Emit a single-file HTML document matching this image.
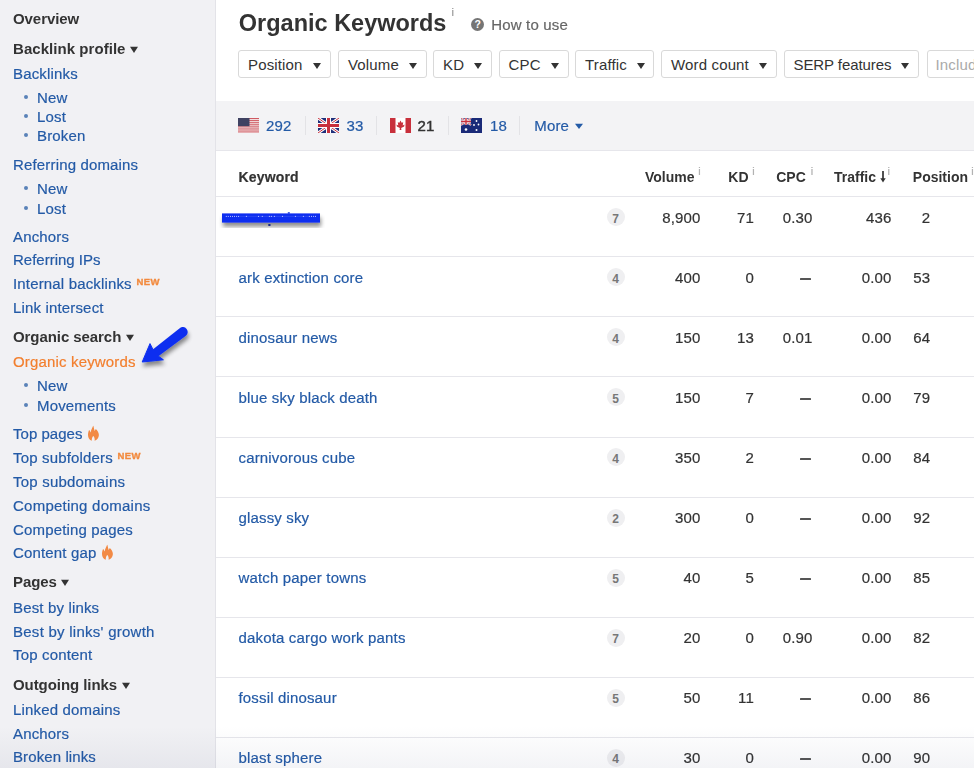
<!DOCTYPE html>
<html><head><meta charset="utf-8"><style>
*{margin:0;padding:0;box-sizing:border-box}
html,body{width:974px;height:768px;overflow:hidden;background:#fff;font-family:"Liberation Sans",sans-serif}
.t{position:absolute;white-space:nowrap;line-height:20px;letter-spacing:0.16px;transform:scaleY(1.03);-webkit-text-stroke:0.2px currentColor}
#side{position:absolute;left:0;top:0;width:216px;height:768px;background:#f1f1f4;border-right:1px solid #e3e3e8}
.caret{display:inline-block;width:0;height:0;border-left:4.2px solid transparent;border-right:4.2px solid transparent;border-top:6.7px solid #333;margin-left:4.5px;vertical-align:1.2px}
.newb{font-size:9.5px;font-weight:bold;color:#f28a3e;position:relative;top:-4.2px;margin-left:4.8px;line-height:10px;letter-spacing:0.3px;-webkit-text-stroke:0.35px #f28a3e}
.fire{position:relative;top:2px;margin-left:5px;vertical-align:baseline}
.bul{position:absolute;left:24px;width:4px;height:4px;border-radius:50%;background:#5a82b8}
#main{position:absolute;left:216px;top:0;width:758px;height:768px}
.help{position:absolute;width:13px;height:13px;border-radius:50%;background:#757575;color:#fff;font-size:10.5px;font-weight:bold;text-align:center;line-height:13.5px;transform:scale(1.0)}
.btn{position:absolute;top:50px;height:28px;border:1px solid #d9d9d9;border-radius:3px;font-size:15px;color:#333;line-height:26px;padding-top:1.4px;padding-left:9px;background:#fff;white-space:nowrap;letter-spacing:0.15px}
.dcaret{display:inline-block;width:0;height:0;border-left:4.3px solid transparent;border-right:4.3px solid transparent;border-top:6px solid #333;margin-left:10px;vertical-align:1.6px}
.band{position:absolute;left:216px;top:101px;width:758px;height:49px;background:#f3f3f5}
.hline{position:absolute;left:216px;width:758px;height:1px;background:#e6e6eb}
.badge{position:absolute;left:606.5px;width:18px;height:18px;border-radius:50%;background:#efeff1;color:#777;font-size:12px;font-weight:bold;text-align:center;line-height:18px;padding-top:1.6px}
.sup{font-size:11px;color:#b0b0b0;line-height:12px}
.flag{position:absolute}
.vsep{position:absolute;top:116px;width:1px;height:19px;background:#e3e3e6}
.mcaret{display:inline-block;width:0;height:0;border-left:4px solid transparent;border-right:4px solid transparent;border-top:5px solid #235aa6;margin-left:5.7px;vertical-align:2px}
#shade{position:absolute;left:0;top:726px;width:974px;height:42px;background:linear-gradient(rgba(40,50,100,0),rgba(40,50,100,0.055))}
</style></head><body>
<div id="side"></div>
<div class="t" style="left:13px;top:8.60px;font-size:15px;line-height:20px;color:#333333;font-weight:bold;transform-origin:0 15.20px;letter-spacing:-0.07px;-webkit-text-stroke:0">Overview</div>
<div class="t" style="left:13px;top:38.60px;font-size:15px;line-height:20px;color:#333333;font-weight:bold;transform-origin:0 15.20px;letter-spacing:0.05px;-webkit-text-stroke:0">Backlink profile<span class="caret"></span></div>
<div class="t" style="left:13px;top:63.70px;font-size:15px;line-height:20px;color:#235aa6;font-weight:normal;transform-origin:0 15.20px;">Backlinks</div>
<div class="bul" style="top:94.5px"></div>
<div class="t" style="left:37px;top:87.50px;font-size:15px;line-height:20px;color:#235aa6;font-weight:normal;transform-origin:0 15.20px;">New</div>
<div class="bul" style="top:114.3px"></div>
<div class="t" style="left:37px;top:107.30px;font-size:15px;line-height:20px;color:#235aa6;font-weight:normal;transform-origin:0 15.20px;">Lost</div>
<div class="bul" style="top:133.2px"></div>
<div class="t" style="left:37px;top:126.20px;font-size:15px;line-height:20px;color:#235aa6;font-weight:normal;transform-origin:0 15.20px;">Broken</div>
<div class="t" style="left:13px;top:154.50px;font-size:15px;line-height:20px;color:#235aa6;font-weight:normal;transform-origin:0 15.20px;">Referring domains</div>
<div class="bul" style="top:185.7px"></div>
<div class="t" style="left:37px;top:178.70px;font-size:15px;line-height:20px;color:#235aa6;font-weight:normal;transform-origin:0 15.20px;">New</div>
<div class="bul" style="top:205.7px"></div>
<div class="t" style="left:37px;top:198.70px;font-size:15px;line-height:20px;color:#235aa6;font-weight:normal;transform-origin:0 15.20px;">Lost</div>
<div class="t" style="left:13px;top:226.50px;font-size:15px;line-height:20px;color:#235aa6;font-weight:normal;transform-origin:0 15.20px;">Anchors</div>
<div class="t" style="left:13px;top:250.20px;font-size:15px;line-height:20px;color:#235aa6;font-weight:normal;transform-origin:0 15.20px;letter-spacing:0">Referring IPs</div>
<div class="t" style="left:13px;top:274.30px;font-size:15px;line-height:20px;color:#235aa6;font-weight:normal;transform-origin:0 15.20px;">Internal backlinks<span class="newb">NEW</span></div>
<div class="t" style="left:13px;top:297.90px;font-size:15px;line-height:20px;color:#235aa6;font-weight:normal;transform-origin:0 15.20px;">Link intersect</div>
<div class="t" style="left:13px;top:327.40px;font-size:15px;line-height:20px;color:#333333;font-weight:bold;transform-origin:0 15.20px;letter-spacing:-0.07px;-webkit-text-stroke:0">Organic search<span class="caret"></span></div>
<div class="t" style="left:13px;top:352.00px;font-size:15px;line-height:20px;color:#f27f2e;font-weight:normal;transform-origin:0 15.20px;">Organic keywords</div>
<div class="bul" style="top:383.1px"></div>
<div class="t" style="left:37px;top:376.10px;font-size:15px;line-height:20px;color:#235aa6;font-weight:normal;transform-origin:0 15.20px;">New</div>
<div class="bul" style="top:402.6px"></div>
<div class="t" style="left:37px;top:395.60px;font-size:15px;line-height:20px;color:#235aa6;font-weight:normal;transform-origin:0 15.20px;">Movements</div>
<div class="t" style="left:13px;top:423.80px;font-size:15px;line-height:20px;color:#235aa6;font-weight:normal;transform-origin:0 15.20px;letter-spacing:0.03px">Top pages<svg class="fire" width="11" height="15" viewBox="0 0 11 15"><path d="M5.3 0 L6.6 5.2 L7.8 3.3 C9.5 5 11 7 10.9 9.2 C10.8 12 9 14 6.6 14.8 C7 12.5 6.3 11 5.3 10 C4.3 11 3.6 12.5 3.8 14.8 C1.5 14 0 12 0 9.2 C0 7 0.6 5.5 1.2 4.1 L2.6 6.6 C3 4 4.5 2 5.3 0 Z" fill="#f28a45"/></svg></div>
<div class="t" style="left:13px;top:447.80px;font-size:15px;line-height:20px;color:#235aa6;font-weight:normal;transform-origin:0 15.20px;">Top subfolders<span class="newb">NEW</span></div>
<div class="t" style="left:13px;top:471.90px;font-size:15px;line-height:20px;color:#235aa6;font-weight:normal;transform-origin:0 15.20px;letter-spacing:0.21px">Top subdomains</div>
<div class="t" style="left:13px;top:495.50px;font-size:15px;line-height:20px;color:#235aa6;font-weight:normal;transform-origin:0 15.20px;letter-spacing:0.24px">Competing domains</div>
<div class="t" style="left:13px;top:519.60px;font-size:15px;line-height:20px;color:#235aa6;font-weight:normal;transform-origin:0 15.20px;">Competing pages</div>
<div class="t" style="left:13px;top:543.00px;font-size:15px;line-height:20px;color:#235aa6;font-weight:normal;transform-origin:0 15.20px;">Content gap<svg class="fire" width="11" height="15" viewBox="0 0 11 15"><path d="M5.3 0 L6.6 5.2 L7.8 3.3 C9.5 5 11 7 10.9 9.2 C10.8 12 9 14 6.6 14.8 C7 12.5 6.3 11 5.3 10 C4.3 11 3.6 12.5 3.8 14.8 C1.5 14 0 12 0 9.2 C0 7 0.6 5.5 1.2 4.1 L2.6 6.6 C3 4 4.5 2 5.3 0 Z" fill="#f28a45"/></svg></div>
<div class="t" style="left:13px;top:572.20px;font-size:15px;line-height:20px;color:#333333;font-weight:bold;transform-origin:0 15.20px;letter-spacing:-0.07px;-webkit-text-stroke:0">Pages<span class="caret"></span></div>
<div class="t" style="left:13px;top:597.50px;font-size:15px;line-height:20px;color:#235aa6;font-weight:normal;transform-origin:0 15.20px;">Best by links</div>
<div class="t" style="left:13px;top:621.50px;font-size:15px;line-height:20px;color:#235aa6;font-weight:normal;transform-origin:0 15.20px;letter-spacing:0.26px">Best by links' growth</div>
<div class="t" style="left:13px;top:645.40px;font-size:15px;line-height:20px;color:#235aa6;font-weight:normal;transform-origin:0 15.20px;">Top content</div>
<div class="t" style="left:13px;top:675.20px;font-size:15px;line-height:20px;color:#333333;font-weight:bold;transform-origin:0 15.20px;letter-spacing:-0.07px;-webkit-text-stroke:0">Outgoing links<span class="caret"></span></div>
<div class="t" style="left:13px;top:699.50px;font-size:15px;line-height:20px;color:#235aa6;font-weight:normal;transform-origin:0 15.20px;">Linked domains</div>
<div class="t" style="left:13px;top:723.70px;font-size:15px;line-height:20px;color:#235aa6;font-weight:normal;transform-origin:0 15.20px;">Anchors</div>
<div class="t" style="left:13px;top:747.30px;font-size:15px;line-height:20px;color:#235aa6;font-weight:normal;transform-origin:0 15.20px;letter-spacing:0.1px">Broken links</div>

<div class="t" style="left:238.8px;top:8.06px;font-size:23.5px;line-height:30px;color:#333333;font-weight:bold;transform-origin:0 23.14px;letter-spacing:0;-webkit-text-stroke:0">Organic Keywords</div>
<div class="t" style="left:451.5px;top:6.3px;font-size:11px;line-height:12px;color:#999">i</div><div class="help" style="left:471.2px;top:18px">?</div><div class="t" style="left:491.3px;top:14.60px;font-size:15px;line-height:20px;color:#666;font-weight:normal;transform-origin:0 15.20px;">How to use</div>
<div class="btn" style="left:238px;width:93px"><span style="letter-spacing:0.15px">Position</span><span class="dcaret"></span></div>
<div class="btn" style="left:338px;width:88.5px"><span style="letter-spacing:0.15px">Volume</span><span class="dcaret"></span></div>
<div class="btn" style="left:433px;width:58.5px"><span style="letter-spacing:0.15px">KD</span><span class="dcaret"></span></div>
<div class="btn" style="left:498.5px;width:70.5px"><span style="letter-spacing:0.15px">CPC</span><span class="dcaret"></span></div>
<div class="btn" style="left:575px;width:78.5px"><span style="letter-spacing:0.15px">Traffic</span><span class="dcaret"></span></div>
<div class="btn" style="left:661px;width:116px"><span style="letter-spacing:0.15px">Word count</span><span class="dcaret"></span></div>
<div class="btn" style="left:783.5px;width:135.5px"><span style="letter-spacing:-0.08px">SERP features</span><span class="dcaret"></span></div>
<div class="btn inc" style="left:927px;width:100px;padding-left:7.5px"><span style="color:#aaa">Include</span></div>
<div class="band"></div>
<svg class="flag" style="left:238px;top:118px" width="21" height="15" viewBox="0 0 21 15"><rect width="21" height="15" fill="#f6eeee"/><rect y="0.00" width="21" height="1.1" fill="#cf5a62"/><rect y="2.08" width="21" height="1.1" fill="#cf5a62"/><rect y="4.17" width="21" height="1.1" fill="#cf5a62"/><rect y="6.25" width="21" height="1.1" fill="#cf5a62"/><rect y="8.33" width="21" height="1.1" fill="#cf5a62"/><rect y="10.42" width="21" height="1.1" fill="#cf5a62"/><rect y="12.50" width="21" height="1.1" fill="#cf5a62"/><rect y="14.58" width="21" height="1.1" fill="#cf5a62"/><rect width="11.5" height="8.2" fill="#3f4262"/></svg><svg class="flag" style="left:318px;top:118px" width="21" height="15" viewBox="0 0 21 15"><rect width="21" height="15" fill="#1f2f7a"/><path d="M0 0L21 15M21 0L0 15" stroke="#fff" stroke-width="3"/><path d="M0 0L21 15M21 0L0 15" stroke="#c8303c" stroke-width="1"/><path d="M10.5 0V15M0 7.5H21" stroke="#fff" stroke-width="5"/><path d="M10.5 0V15M0 7.5H21" stroke="#c8303c" stroke-width="3"/></svg><svg class="flag" style="left:390px;top:118px" width="21" height="15" viewBox="0 0 21 15"><rect width="21" height="15" fill="#fff"/><rect width="5.5" height="15" fill="#c8303c"/><rect x="15.5" width="5.5" height="15" fill="#c8303c"/><g transform="translate(10.5 7.2) scale(1.3) translate(-10.5 -7.2)"><path d="M10.5 3.5L11.4 5.3L12.6 4.9L12.2 7.4L13.6 6.6L13.3 8.2L11 9.3L11.2 10.8H9.8L10 9.3L7.7 8.2L7.4 6.6L8.8 7.4L8.4 4.9L9.6 5.3Z" fill="#c8303c"/></g></svg><svg class="flag" style="left:461px;top:118px" width="21" height="15" viewBox="0 0 21 15"><rect width="21" height="15" fill="#1a2a78"/><g><path d="M0 0L10 7M10 0L0 7" stroke="#fff" stroke-width="2"/><path d="M0 0L10 7M10 0L0 7" stroke="#c8303c" stroke-width="0.8"/><path d="M5 0V7M0 3.5H10" stroke="#fff" stroke-width="2.6"/><path d="M5 0V7M0 3.5H10" stroke="#c8303c" stroke-width="1.4"/></g><circle cx="5" cy="11.5" r="1.3" fill="#fff"/><circle cx="15.5" cy="3" r="0.9" fill="#fff"/><circle cx="13" cy="7" r="0.9" fill="#fff"/><circle cx="17.5" cy="6.5" r="0.9" fill="#fff"/><circle cx="15.5" cy="12" r="1" fill="#fff"/></svg><div class="t" style="left:266px;top:115.80px;font-size:15px;line-height:20px;color:#235aa6;font-weight:normal;transform-origin:0 15.20px;">292</div>
<div class="t" style="left:346.4px;top:115.80px;font-size:15px;line-height:20px;color:#235aa6;font-weight:normal;transform-origin:0 15.20px;">33</div>
<div class="t" style="left:417.5px;top:115.80px;font-size:15px;line-height:20px;color:#333333;font-weight:normal;transform-origin:0 15.20px;-webkit-text-stroke:0.45px #333">21</div>
<div class="t" style="left:490.1px;top:115.80px;font-size:15px;line-height:20px;color:#235aa6;font-weight:normal;transform-origin:0 15.20px;">18</div>
<div class="t" style="left:534.3px;top:115.80px;font-size:15px;line-height:20px;color:#235aa6;font-weight:normal;transform-origin:0 15.20px;">More<span class="mcaret"></span></div>
<div class="vsep" style="left:305.0px"></div><div class="vsep" style="left:376.4px"></div><div class="vsep" style="left:447.8px"></div><div class="vsep" style="left:519.4px"></div><svg style="position:absolute;left:0;top:0" width="974" height="768"><defs><filter id="sh" x="-30%" y="-50%" width="160%" height="250%"><feGaussianBlur in="SourceAlpha" stdDeviation="1.6"/><feOffset dx="0" dy="3"/><feComponentTransfer><feFuncA type="linear" slope="0.55"/></feComponentTransfer><feMerge><feMergeNode/><feMergeNode in="SourceGraphic"/></feMerge></filter><filter id="sh2" x="-50%" y="-50%" width="200%" height="200%"><feGaussianBlur in="SourceAlpha" stdDeviation="2"/><feOffset dx="1" dy="3.5"/><feComponentTransfer><feFuncA type="linear" slope="0.45"/></feComponentTransfer><feMerge><feMergeNode/><feMergeNode in="SourceGraphic"/></feMerge></filter></defs><g filter="url(#sh2)"><rect x="222" y="213.4" width="98" height="9.2" fill="#0c2ff0"/></g><line x1="239" y1="216.4" x2="309" y2="216.4" stroke="#3550f2" stroke-width="0.7"/><rect x="225.8" y="215.9" width="1" height="1" fill="#b8c2ff"/><rect x="227.8" y="215.9" width="1" height="1" fill="#b8c2ff"/><rect x="230.0" y="215.9" width="1" height="1" fill="#b8c2ff"/><rect x="232.0" y="215.9" width="1" height="1" fill="#b8c2ff"/><rect x="234.0" y="215.9" width="1" height="1" fill="#b8c2ff"/><rect x="236.1" y="215.9" width="1" height="1" fill="#b8c2ff"/><rect x="238.0" y="215.9" width="1" height="1" fill="#b8c2ff"/><rect x="245.9" y="215.9" width="1" height="1" fill="#b8c2ff"/><rect x="258.0" y="215.9" width="1" height="1" fill="#b8c2ff"/><rect x="261.8" y="215.9" width="1" height="1" fill="#b8c2ff"/><rect x="268.9" y="215.9" width="1" height="1" fill="#b8c2ff"/><rect x="270.9" y="215.9" width="1" height="1" fill="#b8c2ff"/><rect x="273.9" y="215.9" width="1" height="1" fill="#b8c2ff"/><rect x="282.0" y="215.9" width="1" height="1" fill="#b8c2ff"/><rect x="294.9" y="215.9" width="1" height="1" fill="#b8c2ff"/><rect x="302.9" y="215.9" width="1" height="1" fill="#b8c2ff"/><rect x="308.9" y="215.9" width="1" height="1" fill="#b8c2ff"/><rect x="311.0" y="215.9" width="1" height="1" fill="#b8c2ff"/><rect x="313.1" y="215.9" width="1" height="1" fill="#b8c2ff"/><rect x="315.0" y="215.9" width="1" height="1" fill="#b8c2ff"/><rect x="287.8" y="212.2" width="2" height="1.5" fill="#1a3ae0"/><rect x="268.3" y="224" width="2.2" height="2" fill="#1a2a8a"/><g filter="url(#sh2)"><path d="M150.6 351.3 L179.7 328.2 A4.9 4.9 0 0 1 185.9 335.8 L156.0 358.0 Z" fill="#0c2ff0"/><path d="M150 343.6 L152.9 349.4 L158.3 356.1 L163.4 359.8 L142.2 362 Z" fill="#0c2ff0" stroke="#0c2ff0" stroke-width="1" stroke-linejoin="round"/></g></svg><div class="t" style="left:238.5px;top:166.95px;font-size:14px;line-height:20px;color:#333333;font-weight:bold;transform-origin:0 14.85px;">Keyword</div>
<div class="t" style="left:645px;top:166.95px;font-size:14px;line-height:20px;color:#333333;font-weight:bold;transform-origin:0 14.85px;letter-spacing:0;-webkit-text-stroke:0">Volume</div>
<div class="t sup" style="left:698.2px;top:165.3px">i</div>
<div class="t" style="left:728.3px;top:166.95px;font-size:14px;line-height:20px;color:#333333;font-weight:bold;transform-origin:0 14.85px;letter-spacing:0;-webkit-text-stroke:0">KD</div>
<div class="t sup" style="left:752.2px;top:165.3px">i</div>
<div class="t" style="left:776.2px;top:166.95px;font-size:14px;line-height:20px;color:#333333;font-weight:bold;transform-origin:0 14.85px;letter-spacing:0;-webkit-text-stroke:0">CPC</div>
<div class="t sup" style="left:810.7px;top:165.3px">i</div>
<div class="t" style="left:834px;top:166.95px;font-size:14px;line-height:20px;color:#333333;font-weight:bold;transform-origin:0 14.85px;letter-spacing:0;-webkit-text-stroke:0">Traffic</div>
<div class="t sup" style="left:887.5px;top:165.3px">i</div>
<div class="t" style="left:912.8px;top:166.95px;font-size:14px;line-height:20px;color:#333333;font-weight:bold;transform-origin:0 14.85px;letter-spacing:0;-webkit-text-stroke:0">Position</div>
<div class="t sup" style="left:971.2px;top:165.3px">i</div>
<svg style="position:absolute;left:880px;top:171px" width="6" height="12" viewBox="0 0 6 12"><path d="M3 0V10" stroke="#333" stroke-width="1.7"/><path d="M0.3 7.2L3 11.5L5.7 7.2Z" fill="#333"/></svg><div class="hline" style="top:150px"></div>
<div class="hline" style="top:196px"></div>
<div class="badge" style="top:208.0px">7</div>
<div class="t r" style="right:273.4px;top:207.50px;font-size:15px;color:#333333;font-weight:normal;transform-origin:0 15.20px">8,900</div>
<div class="t r" style="right:220px;top:207.50px;font-size:15px;color:#333333;font-weight:normal;transform-origin:0 15.20px">71</div>
<div class="t r" style="right:161.5px;top:207.50px;font-size:15px;color:#333333;font-weight:normal;transform-origin:0 15.20px">0.30</div>
<div class="t r" style="right:82.5px;top:207.50px;font-size:15px;color:#333333;font-weight:normal;transform-origin:0 15.20px">436</div>
<div class="t r" style="right:43.700000000000045px;top:207.50px;font-size:15px;color:#333333;font-weight:normal;transform-origin:0 15.20px">2</div>
<div class="hline" style="top:256px"></div>
<div class="t" style="left:238.5px;top:267.60px;font-size:15px;line-height:20px;color:#235aa6;font-weight:normal;transform-origin:0 15.20px;">ark extinction core</div>
<div class="badge" style="top:268.1px">4</div>
<div class="t r" style="right:273.4px;top:267.60px;font-size:15px;color:#333333;font-weight:normal;transform-origin:0 15.20px">400</div>
<div class="t r" style="right:220px;top:267.60px;font-size:15px;color:#333333;font-weight:normal;transform-origin:0 15.20px">0</div>
<div style="position:absolute;left:800px;top:278px;width:11px;height:2px;background:#555;border-radius:0.5px"></div>
<div class="t r" style="right:82.5px;top:267.60px;font-size:15px;color:#333333;font-weight:normal;transform-origin:0 15.20px">0.00</div>
<div class="t r" style="right:43.700000000000045px;top:267.60px;font-size:15px;color:#333333;font-weight:normal;transform-origin:0 15.20px">53</div>
<div class="hline" style="top:316px"></div>
<div class="t" style="left:238.5px;top:327.70px;font-size:15px;line-height:20px;color:#235aa6;font-weight:normal;transform-origin:0 15.20px;">dinosaur news</div>
<div class="badge" style="top:328.2px">4</div>
<div class="t r" style="right:273.4px;top:327.70px;font-size:15px;color:#333333;font-weight:normal;transform-origin:0 15.20px">150</div>
<div class="t r" style="right:220px;top:327.70px;font-size:15px;color:#333333;font-weight:normal;transform-origin:0 15.20px">13</div>
<div class="t r" style="right:161.5px;top:327.70px;font-size:15px;color:#333333;font-weight:normal;transform-origin:0 15.20px">0.01</div>
<div class="t r" style="right:82.5px;top:327.70px;font-size:15px;color:#333333;font-weight:normal;transform-origin:0 15.20px">0.00</div>
<div class="t r" style="right:43.700000000000045px;top:327.70px;font-size:15px;color:#333333;font-weight:normal;transform-origin:0 15.20px">64</div>
<div class="hline" style="top:376px"></div>
<div class="t" style="left:238.5px;top:387.80px;font-size:15px;line-height:20px;color:#235aa6;font-weight:normal;transform-origin:0 15.20px;">blue sky black death</div>
<div class="badge" style="top:388.3px">5</div>
<div class="t r" style="right:273.4px;top:387.80px;font-size:15px;color:#333333;font-weight:normal;transform-origin:0 15.20px">150</div>
<div class="t r" style="right:220px;top:387.80px;font-size:15px;color:#333333;font-weight:normal;transform-origin:0 15.20px">7</div>
<div style="position:absolute;left:800px;top:398px;width:11px;height:2px;background:#555;border-radius:0.5px"></div>
<div class="t r" style="right:82.5px;top:387.80px;font-size:15px;color:#333333;font-weight:normal;transform-origin:0 15.20px">0.00</div>
<div class="t r" style="right:43.700000000000045px;top:387.80px;font-size:15px;color:#333333;font-weight:normal;transform-origin:0 15.20px">79</div>
<div class="hline" style="top:437px"></div>
<div class="t" style="left:238.5px;top:447.90px;font-size:15px;line-height:20px;color:#235aa6;font-weight:normal;transform-origin:0 15.20px;">carnivorous cube</div>
<div class="badge" style="top:448.4px">4</div>
<div class="t r" style="right:273.4px;top:447.90px;font-size:15px;color:#333333;font-weight:normal;transform-origin:0 15.20px">350</div>
<div class="t r" style="right:220px;top:447.90px;font-size:15px;color:#333333;font-weight:normal;transform-origin:0 15.20px">2</div>
<div style="position:absolute;left:800px;top:458px;width:11px;height:2px;background:#555;border-radius:0.5px"></div>
<div class="t r" style="right:82.5px;top:447.90px;font-size:15px;color:#333333;font-weight:normal;transform-origin:0 15.20px">0.00</div>
<div class="t r" style="right:43.700000000000045px;top:447.90px;font-size:15px;color:#333333;font-weight:normal;transform-origin:0 15.20px">84</div>
<div class="hline" style="top:497px"></div>
<div class="t" style="left:238.5px;top:508.00px;font-size:15px;line-height:20px;color:#235aa6;font-weight:normal;transform-origin:0 15.20px;">glassy sky</div>
<div class="badge" style="top:508.5px">2</div>
<div class="t r" style="right:273.4px;top:508.00px;font-size:15px;color:#333333;font-weight:normal;transform-origin:0 15.20px">300</div>
<div class="t r" style="right:220px;top:508.00px;font-size:15px;color:#333333;font-weight:normal;transform-origin:0 15.20px">0</div>
<div style="position:absolute;left:800px;top:518px;width:11px;height:2px;background:#555;border-radius:0.5px"></div>
<div class="t r" style="right:82.5px;top:508.00px;font-size:15px;color:#333333;font-weight:normal;transform-origin:0 15.20px">0.00</div>
<div class="t r" style="right:43.700000000000045px;top:508.00px;font-size:15px;color:#333333;font-weight:normal;transform-origin:0 15.20px">92</div>
<div class="hline" style="top:557px"></div>
<div class="t" style="left:238.5px;top:568.10px;font-size:15px;line-height:20px;color:#235aa6;font-weight:normal;transform-origin:0 15.20px;">watch paper towns</div>
<div class="badge" style="top:568.6px">5</div>
<div class="t r" style="right:273.4px;top:568.10px;font-size:15px;color:#333333;font-weight:normal;transform-origin:0 15.20px">40</div>
<div class="t r" style="right:220px;top:568.10px;font-size:15px;color:#333333;font-weight:normal;transform-origin:0 15.20px">5</div>
<div style="position:absolute;left:800px;top:578px;width:11px;height:2px;background:#555;border-radius:0.5px"></div>
<div class="t r" style="right:82.5px;top:568.10px;font-size:15px;color:#333333;font-weight:normal;transform-origin:0 15.20px">0.00</div>
<div class="t r" style="right:43.700000000000045px;top:568.10px;font-size:15px;color:#333333;font-weight:normal;transform-origin:0 15.20px">85</div>
<div class="hline" style="top:617px"></div>
<div class="t" style="left:238.5px;top:628.20px;font-size:15px;line-height:20px;color:#235aa6;font-weight:normal;transform-origin:0 15.20px;">dakota cargo work pants</div>
<div class="badge" style="top:628.7px">7</div>
<div class="t r" style="right:273.4px;top:628.20px;font-size:15px;color:#333333;font-weight:normal;transform-origin:0 15.20px">20</div>
<div class="t r" style="right:220px;top:628.20px;font-size:15px;color:#333333;font-weight:normal;transform-origin:0 15.20px">0</div>
<div class="t r" style="right:161.5px;top:628.20px;font-size:15px;color:#333333;font-weight:normal;transform-origin:0 15.20px">0.90</div>
<div class="t r" style="right:82.5px;top:628.20px;font-size:15px;color:#333333;font-weight:normal;transform-origin:0 15.20px">0.00</div>
<div class="t r" style="right:43.700000000000045px;top:628.20px;font-size:15px;color:#333333;font-weight:normal;transform-origin:0 15.20px">82</div>
<div class="hline" style="top:677px"></div>
<div class="t" style="left:238.5px;top:688.30px;font-size:15px;line-height:20px;color:#235aa6;font-weight:normal;transform-origin:0 15.20px;">fossil dinosaur</div>
<div class="badge" style="top:688.8px">5</div>
<div class="t r" style="right:273.4px;top:688.30px;font-size:15px;color:#333333;font-weight:normal;transform-origin:0 15.20px">50</div>
<div class="t r" style="right:220px;top:688.30px;font-size:15px;color:#333333;font-weight:normal;transform-origin:0 15.20px">11</div>
<div style="position:absolute;left:800px;top:698px;width:11px;height:2px;background:#555;border-radius:0.5px"></div>
<div class="t r" style="right:82.5px;top:688.30px;font-size:15px;color:#333333;font-weight:normal;transform-origin:0 15.20px">0.00</div>
<div class="t r" style="right:43.700000000000045px;top:688.30px;font-size:15px;color:#333333;font-weight:normal;transform-origin:0 15.20px">86</div>
<div class="hline" style="top:737px"></div>
<div class="t" style="left:238.5px;top:748.40px;font-size:15px;line-height:20px;color:#235aa6;font-weight:normal;transform-origin:0 15.20px;">blast sphere</div>
<div class="badge" style="top:748.9px">4</div>
<div class="t r" style="right:273.4px;top:748.40px;font-size:15px;color:#333333;font-weight:normal;transform-origin:0 15.20px">30</div>
<div class="t r" style="right:220px;top:748.40px;font-size:15px;color:#333333;font-weight:normal;transform-origin:0 15.20px">0</div>
<div style="position:absolute;left:800px;top:758px;width:11px;height:2px;background:#555;border-radius:0.5px"></div>
<div class="t r" style="right:82.5px;top:748.40px;font-size:15px;color:#333333;font-weight:normal;transform-origin:0 15.20px">0.00</div>
<div class="t r" style="right:43.700000000000045px;top:748.40px;font-size:15px;color:#333333;font-weight:normal;transform-origin:0 15.20px">90</div>

<div id="shade"></div>
</body></html>
